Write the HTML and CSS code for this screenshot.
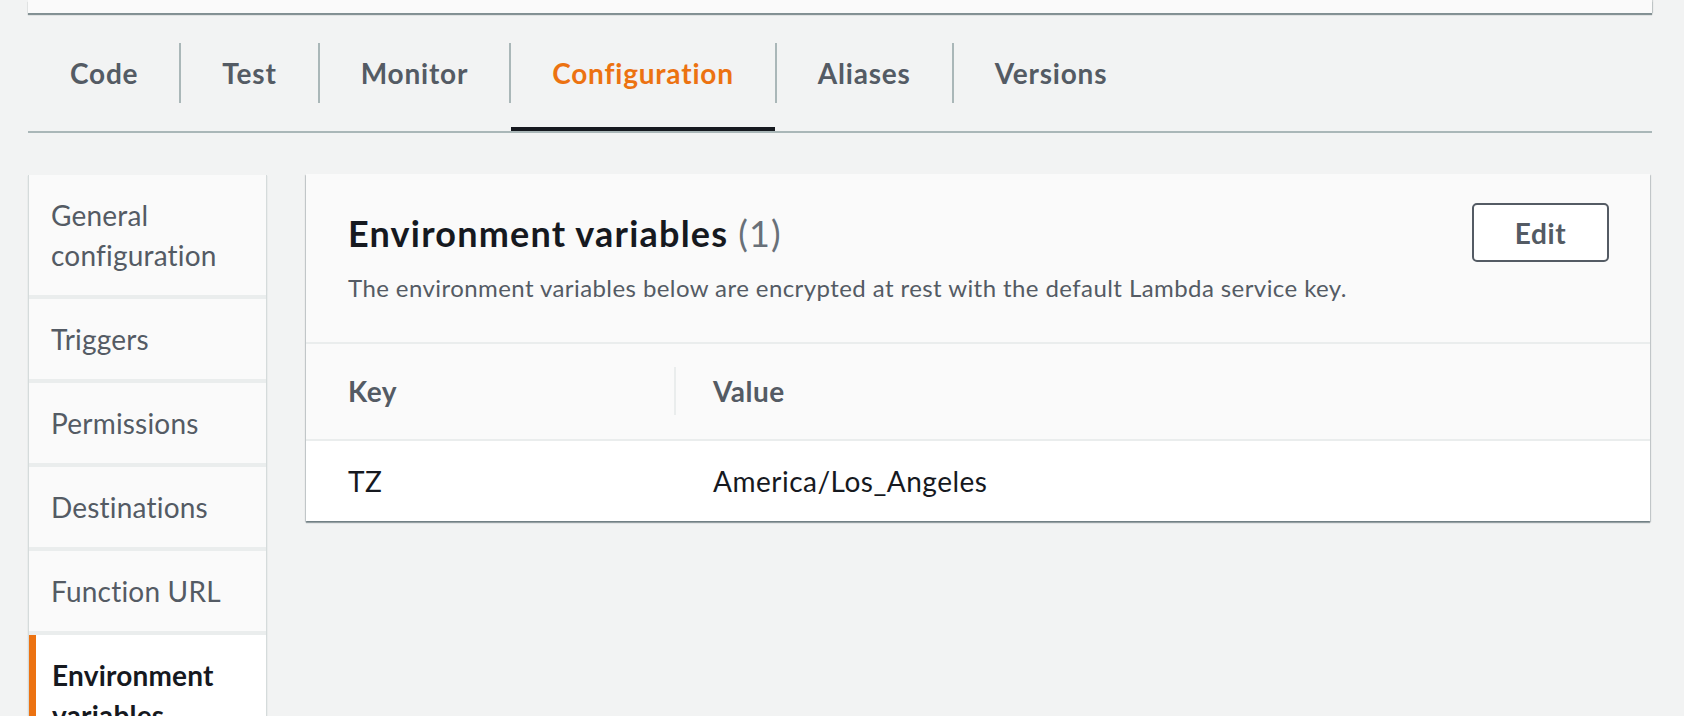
FILE: index.html
```html
<!DOCTYPE html>
<html lang="en">
<head>
<meta charset="utf-8">
<title>Lambda configuration</title>
<link rel="stylesheet" href="styles.css">
</head>
<body>
<div class="page">
  <div class="topcard"></div>
  <nav class="tabs">
    <a class="tab">Code</a>
    <span class="sep"></span>
    <a class="tab">Test</a>
    <span class="sep"></span>
    <a class="tab">Monitor</a>
    <span class="sep"></span>
    <a class="tab active">Configuration</a>
    <span class="sep"></span>
    <a class="tab">Aliases</a>
    <span class="sep"></span>
    <a class="tab">Versions</a>
  </nav>
  <div class="content">
    <ul class="sidenav">
      <li class="item">General<br>configuration</li>
      <li class="item">Triggers</li>
      <li class="item">Permissions</li>
      <li class="item">Destinations</li>
      <li class="item">Function URL</li>
      <li class="item active">Environment<br>variables</li>
    </ul>
    <section class="panel">
      <div class="panel-header">
        <div class="title-row">
          <h2 class="title">Environment variables <span class="count">(1)</span></h2>
          <button class="btn">Edit</button>
        </div>
        <p class="desc">The environment variables below are encrypted at rest with the default Lambda service key.</p>
      </div>
      <div class="table">
        <div class="thead">
          <div class="th key-col">Key</div>
          <div class="th val-col"><span class="colsep"></span>Value</div>
        </div>
        <div class="trow">
          <div class="td key-col">TZ</div>
          <div class="td val-col">America/Los_Angeles</div>
        </div>
      </div>
    </section>
  </div>
</div>
</body>
</html>
```
FILE: styles.css
```css
html, body {
  margin: 0;
  padding: 0;
  background: #f2f3f3;
  font-family: Lato, "Liberation Sans", sans-serif;
  color: #16191f;
  overflow: hidden;
}

.page {
  width: 1624px;
  margin-left: 28px;
  height: 716px;
}

.topcard {
  height: 13px;
  background: #fafafa;
  box-shadow: 0 2px 1px rgba(0, 28, 36, 0.45), 1px 0 1px rgba(0, 28, 36, 0.15);
}

.tabs {
  display: flex;
  align-items: flex-start;
  border-bottom: 2px solid #aab7b8;
}

.tab {
  display: block;
  margin-top: 30px;
  padding: 0 41px 24px 41px;
  line-height: 60px;
  height: 60px;
  font-size: 28px;
  font-weight: 700;
  letter-spacing: 0.8px;
  color: #545b64;
  border-bottom: 4px solid transparent;
}

.tab:first-child {
  padding-left: 42px;
}

.tab.active {
  color: #ec7211;
  border-bottom-color: #16191f;
}

.sep {
  display: block;
  width: 2px;
  height: 60px;
  margin-top: 30px;
  background: #aab7b8;
}

.content {
  display: flex;
  align-items: flex-start;
  margin-top: 42px;
}

.sidenav {
  list-style: none;
  margin: 0;
  padding: 0;
  width: 237px;
  display: flex;
  flex-direction: column;
  gap: 4px;
  background: #eaeded;
  border-left: 1px solid #d5dbdb;
  border-right: 1px solid #d5dbdb;
  box-shadow: 0 1px 1px rgba(0, 28, 36, 0.2);
}

.item {
  background: #fafafa;
  padding: 20px 22px;
  font-size: 28px;
  line-height: 40px;
  letter-spacing: 0.2px;
  color: #545b64;
}

.item.active {
  background: #ffffff;
  color: #16191f;
  font-weight: 700;
  border-left: 7px solid #ec7211;
  padding-left: 16px;
  padding-bottom: 60px;
}

.panel {
  flex: 1;
  margin-left: 39px;
  margin-right: 2px;
  margin-top: -1px;
  background: #ffffff;
  box-shadow: 0 2px 1px 0 rgba(0, 28, 36, 0.35), 1px 1px 1px 0 rgba(0, 28, 36, 0.15), -1px 1px 1px 0 rgba(0, 28, 36, 0.15);
}

.panel-header {
  background: #fafafa;
  padding: 29px 41px 38px 42px;
  border-bottom: 2px solid #eaeded;
}

.title-row {
  display: flex;
  justify-content: space-between;
  align-items: center;
}

.title {
  margin: 0;
  font-size: 36px;
  line-height: 44px;
  font-weight: 700;
  letter-spacing: 1.2px;
  color: #16191f;
}

.count {
  font-weight: 400;
  color: #687078;
}

.btn {
  width: 137px;
  height: 59px;
  background: #ffffff;
  border: 2px solid #545b64;
  border-radius: 5px;
  font-family: inherit;
  font-size: 28px;
  font-weight: 700;
  letter-spacing: 0.6px;
  color: #545b64;
  padding: 0;
}

.desc {
  margin: 10px 0 0;
  font-size: 24px;
  line-height: 32px;
  letter-spacing: 0.42px;
  color: #545b64;
}

.thead {
  display: flex;
  background: #fafafa;
  border-bottom: 2px solid #eaeded;
}

.trow {
  display: flex;
  background: #ffffff;
}

.key-col {
  width: 368px;
  box-sizing: border-box;
  padding-left: 42px;
}

.val-col {
  flex: 1;
  position: relative;
  padding-left: 39px;
}

.th {
  font-size: 28px;
  line-height: 40px;
  font-weight: 700;
  letter-spacing: 0.5px;
  color: #545b64;
  padding-top: 27px;
  padding-bottom: 28px;
}

.colsep {
  position: absolute;
  left: 0;
  top: 23px;
  width: 2px;
  height: 48px;
  background: #eaeded;
}

.td {
  font-size: 28px;
  line-height: 40px;
  letter-spacing: 0.5px;
  color: #16191f;
  padding-top: 20px;
  padding-bottom: 20px;
}
```
